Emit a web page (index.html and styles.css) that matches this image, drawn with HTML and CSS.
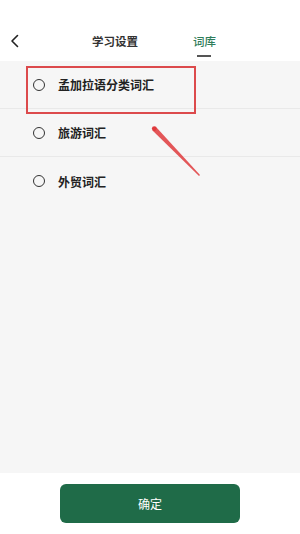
FILE: index.html
```html
<!DOCTYPE html>
<html>
<head>
  <meta charset="utf-8">
  <title>词库</title>
  <link rel="stylesheet" href="styles.css">
</head>
<body>
  <div class="page">
    <div class="header">
      <div class="nav">
        <div class="back">
          <svg width="10" height="14" viewBox="0 0 10 14"><polyline points="7.5,1.5 2,7 7.5,12.5" fill="none" stroke="#222" stroke-width="1.6" stroke-linecap="round" stroke-linejoin="round"/></svg>
        </div>
        <div class="tabs">
          <div class="tab">学习设置</div>
          <div class="tab active">词库<span class="bar"></span></div>
        </div>
      </div>
    </div>

    <div class="content">
      <div class="row">
        <span class="radio"></span>
        <span class="label">孟加拉语分类词汇</span>
      </div>
      <div class="row">
        <span class="radio"></span>
        <span class="label">旅游词汇</span>
      </div>
      <div class="row last">
        <span class="radio"></span>
        <span class="label">外贸词汇</span>
      </div>

      <!-- annotation -->
      <div class="mark"></div>
      <svg class="arrow" width="60" height="60" viewBox="0 0 60 60">
        <path d="M2,2.5 L5.5,2.5 L49,50 L48,51 L1.5,5.5 Z" fill="#df3a3c" opacity="0.85"/>
        <circle cx="3.3" cy="3.6" r="2.4" fill="#df3a3c"/>
      </svg>
    </div>

    <div class="footer">
      <button class="ok">确定</button>
    </div>
  </div>
</body>
</html>
```

FILE: styles.css
```css
* { box-sizing: border-box; }
body { margin: 0; font-family: "Noto Sans CJK SC", "Noto Sans", sans-serif; color: #222; }
.page { width: 300px; height: 534px; display: flex; flex-direction: column; background: #fff; }

.header { height: 61px; padding-top: 28px; background: #fff; }
.nav { height: 26px; display: flex; align-items: center; }
.back { width: 92px; padding-left: 10px; display: flex; align-items: center; }
.tabs { display: flex; gap: 55px; }
.tab { position: relative; font-size: 11.5px; line-height: 16px; color: #333; font-weight: 700; }
.tab.active { color: #2f7d5a; font-weight: 500; }
.tab .bar { position: absolute; left: 4px; top: 22px; width: 14px; height: 1.5px; background: #555; }

.content { position: relative; flex: 1; background: #f6f6f6; }
.row { height: 48px; display: flex; align-items: center; padding-left: 33px; border-bottom: 1px solid #e9e9e9; }
.row.last { border-bottom: none; }
.radio { width: 12px; height: 12px; border: 1.5px solid #333; border-radius: 50%; margin-right: 13px; }
.label { font-size: 12px; font-weight: 700; color: #222; }

.mark { position: absolute; left: 26px; top: 5px; width: 170px; height: 48px; border: 2px solid #dc4a4c; }
.arrow { position: absolute; left: 151px; top: 64px; }

.footer { height: 61px; display: flex; justify-content: center; padding-top: 11px; background: #fff; }
.ok { width: 180px; height: 39px; border: none; border-radius: 6px; background: #1f6b48; color: #fff; font-family: inherit; font-size: 12px; }
```
